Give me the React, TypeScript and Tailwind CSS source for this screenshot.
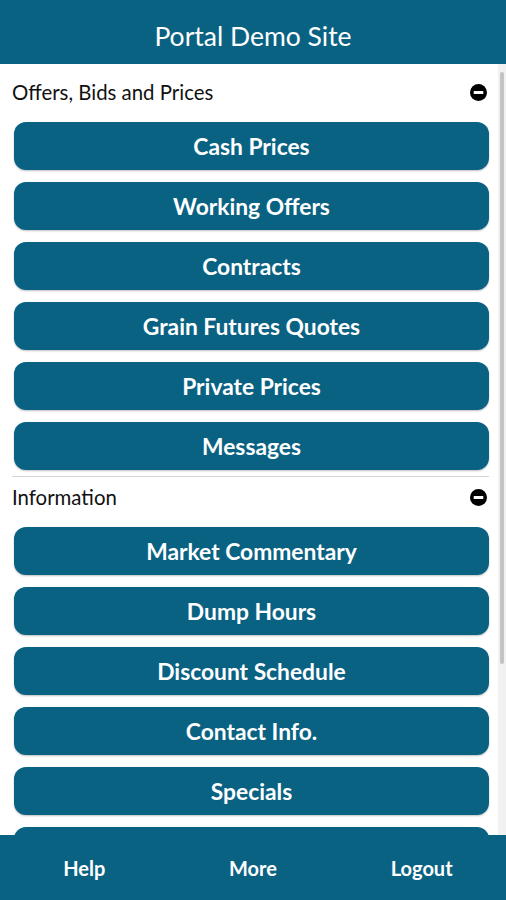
import React from "react";

const teal = "bg-[#0a6283]";

function Btn({ label }: { label: string }) {
  return (
    <div className={`h-[48px] rounded-[12px] ${teal} flex items-center justify-center text-white font-bold text-[22.8px] shadow-[0_1px_2px_rgba(0,0,0,0.25)]`}>
      {label}
    </div>
  );
}

function MinusIcon() {
  return (
    <svg width="17" height="17" viewBox="0 0 16 16">
      <circle cx="8" cy="8" r="8" fill="#000" />
      <rect x="3.5" y="6.6" width="9" height="2.8" fill="#fff" />
    </svg>
  );
}

function Section({ title, items, divider, headH }: { title: string; items: string[]; divider?: boolean; headH: string }) {
  return (
    <div className={divider ? "border-b border-[#d6d6d6] pb-[6px]" : ""}>
      <div className={`${headH} flex items-center justify-between pr-[2px] text-[20.4px] text-[#111]`}>
        <span>{title}</span>
        <MinusIcon />
      </div>
      <div className="flex flex-col gap-[12px] pl-[2px]">
        {items.map((i, k) => (
          <Btn key={k} label={i} />
        ))}
      </div>
    </div>
  );
}

export default function App() {
  return (
    <div className="h-[900px] w-[506px] flex flex-col bg-white overflow-hidden" style={{ fontFamily: "Lato, 'Noto Sans', sans-serif" }}>
      <div className={`h-[64px] shrink-0 ${teal} flex items-center justify-center text-white text-[26.5px] pt-[9px]`}>
        Portal Demo Site
      </div>
      <div className="flex-1 flex min-h-0">
        <div className="flex-1 overflow-hidden pl-[12px] pr-[9px]">
          <Section
            title="Offers, Bids and Prices"
            items={["Cash Prices", "Working Offers", "Contracts", "Grain Futures Quotes", "Private Prices", "Messages"]}
            divider
            headH="h-[58px] pb-[2px]"
          />
          <Section
            title="Information"
            items={["Market Commentary", "Dump Hours", "Discount Schedule", "Contact Info.", "Specials", ""]}
            headH="h-[50px] pb-[9px]"
          />
        </div>
        <div className="w-[8px] shrink-0 bg-[#f1f1f1] flex flex-col items-center pt-[8px]">
          <div className="w-[4px] h-[592px] bg-[#c4c4c4] rounded-[2px]" />
        </div>
      </div>
      <div className={`h-[65px] shrink-0 ${teal} grid grid-cols-3 text-white font-bold text-[20px]`}>
        <div className="flex items-center justify-center">Help</div>
        <div className="flex items-center justify-center">More</div>
        <div className="flex items-center justify-center">Logout</div>
      </div>
    </div>
  );
}
